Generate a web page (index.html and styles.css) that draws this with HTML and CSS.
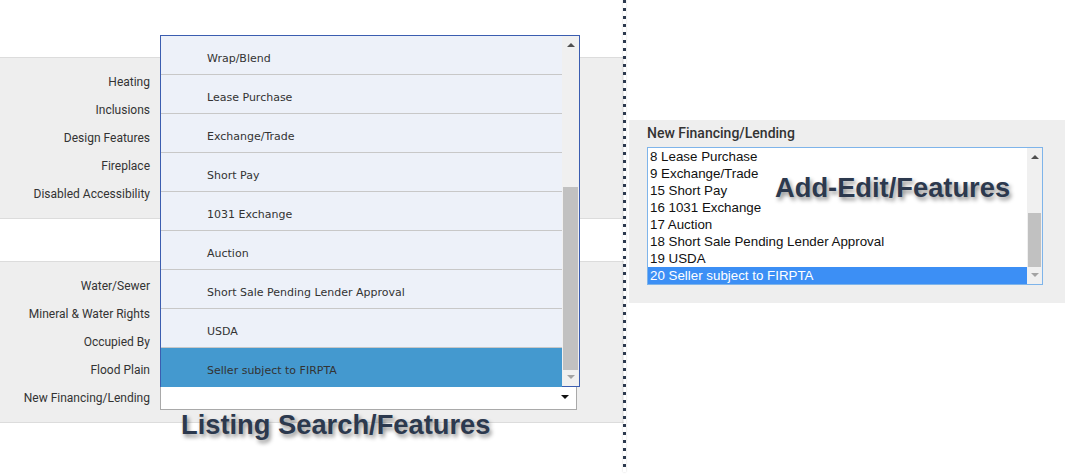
FILE: index.html
```html
<!DOCTYPE html>
<html>
<head>
  <link rel="stylesheet" href="styles.css">
</head>
<body>
  <div class="page">
    <div class="search-side">
      <div class="panel">
        <div class="row"><div class="row-label">Heating</div></div>
        <div class="row"><div class="row-label">Inclusions</div></div>
        <div class="row"><div class="row-label">Design Features</div></div>
        <div class="row"><div class="row-label">Fireplace</div></div>
        <div class="row"><div class="row-label">Disabled Accessibility</div></div>
      </div>

      <div class="panel panel-second">
        <div class="row"><div class="row-label">Water/Sewer</div></div>
        <div class="row"><div class="row-label">Mineral &amp; Water Rights</div></div>
        <div class="row"><div class="row-label">Occupied By</div></div>
        <div class="row"><div class="row-label">Flood Plain</div></div>
        <div class="row">
          <div class="row-label">New Financing/Lending</div>
          <div class="select-box">
            <span class="select-arrow"></span>
          </div>
        </div>
      </div>

      <!-- open dropdown of the select above -->
      <div class="option-popup">
        <div class="option-list">
          <div class="option">Wrap/Blend</div>
          <div class="option">Lease Purchase</div>
          <div class="option">Exchange/Trade</div>
          <div class="option">Short Pay</div>
          <div class="option">1031 Exchange</div>
          <div class="option">Auction</div>
          <div class="option">Short Sale Pending Lender Approval</div>
          <div class="option">USDA</div>
          <div class="option selected">Seller subject to FIRPTA</div>
        </div>
        <div class="scrollbar">
          <span class="arrow-up"></span>
          <div class="scroll-thumb popup-thumb"></div>
          <span class="arrow-down"></span>
        </div>
      </div>

      <div class="caption caption-search">Listing Search/Features</div>
    </div>

    <div class="divider"></div>

    <div class="edit-side">
      <div class="edit-panel">
        <div class="edit-label">New Financing/Lending</div>
        <div class="listbox">
          <div class="listbox-items">
            <div class="listbox-item">8 Lease Purchase</div>
            <div class="listbox-item">9 Exchange/Trade</div>
            <div class="listbox-item">15 Short Pay</div>
            <div class="listbox-item">16 1031 Exchange</div>
            <div class="listbox-item">17 Auction</div>
            <div class="listbox-item">18 Short Sale Pending Lender Approval</div>
            <div class="listbox-item">19 USDA</div>
            <div class="listbox-item selected">20 Seller subject to FIRPTA</div>
          </div>
          <div class="scrollbar listbox-scroll">
            <span class="arrow-up"></span>
            <div class="scroll-thumb listbox-thumb"></div>
            <span class="arrow-down"></span>
          </div>
        </div>
      </div>
      <div class="caption caption-edit">Add-Edit/Features</div>
    </div>
  </div>
</body>
</html>
```

FILE: styles.css
```css
body {
  margin: 0;
  background: white;
  font-family: Roboto, 'Noto Sans', sans-serif;
  color: #333;
}

.page {
  display: flex;
  position: relative;
  width: 1087px;
  height: 474px;
  overflow: hidden;
}

/* Listing search side */
.search-side {
  position: relative;
  width: 624px;
  padding-top: 57px;
}

.panel {
  background: #eeeeee;
  border-top: 1px solid #dcdcdc;
  border-bottom: 1px solid #dcdcdc;
  padding: 10px 0;
}

.panel-second {
  margin-top: 42px;
}

.row {
  display: flex;
  align-items: center;
  height: 28px;
}

.row-label {
  width: 150px;
  text-align: right;
  font-size: 12px;
  margin-right: 10px;
}

.select-box {
  position: relative;
  width: 415px;
  height: 22px;
  background: white;
  border: 1px solid #a9a9a9;
}

.select-arrow {
  position: absolute;
  right: 7px;
  top: 8px;
  border-left: 4px solid transparent;
  border-right: 4px solid transparent;
  border-top: 4px solid #111;
}

.option-popup {
  position: absolute;
  left: 160px;
  top: 35px;
  width: 418px;
  height: 350px;
  display: flex;
  border: 1px solid #3b5db0;
  background: #edf1f9;
}

.option-list {
  flex: 1;
}

.option {
  height: 31px;
  line-height: 31px;
  padding-top: 7px;
  padding-left: 46px;
  font-family: 'DejaVu Sans', Verdana, sans-serif;
  font-size: 11px;
  color: #333;
  border-bottom: 1px solid #c8c8c8;
}

.option.selected {
  background: #4499cf;
  border-bottom: none;
  height: 32px;
}

.scrollbar {
  position: relative;
  width: 17px;
  background: #f0f0f0;
}

.scroll-thumb {
  position: absolute;
  left: 1px;
  right: 1px;
  background: #c1c1c1;
}

.popup-thumb {
  top: 151px;
  height: 183px;
}

.arrow-up,
.arrow-down {
  position: absolute;
  left: 50%;
  margin-left: -4px;
  border-left: 4px solid transparent;
  border-right: 4px solid transparent;
}

.arrow-up {
  top: 7px;
  border-bottom: 4px solid #505050;
}

.arrow-down {
  bottom: 7px;
  border-top: 4px solid #a3a3a3;
}

.caption {
  position: absolute;
  font-family: 'Liberation Sans', Arial, sans-serif;
  font-weight: bold;
  font-size: 27.3px;
  color: #2c394e;
  text-shadow: 2px 3px 4px rgba(0,0,0,0.45);
  white-space: nowrap;
}

.caption-search {
  left: 181px;
  top: 409px;
}

/* dotted divider */
.divider {
  position: absolute;
  left: 623px;
  top: 0;
  width: 3px;
  height: 472px;
  background: repeating-linear-gradient(to bottom, #2c394e 0, #2c394e 3px, transparent 3px, transparent 8px);
  box-shadow: 0 0 2px rgba(0,0,0,0.2);
}

/* Add-edit side */
.edit-side {
  position: relative;
  width: 436px;
  margin-left: 5px;
  padding-top: 120px;
}

.edit-panel {
  background: #eeeeee;
  padding: 5px 22px 18px 18px;
}

.edit-label {
  font-size: 14px;
  font-weight: 500;
  line-height: 17px;
  margin-bottom: 5px;
}

.listbox {
  display: flex;
  height: 136px;
  background: white;
  border: 1px solid #7eb4ea;
}

.listbox-items {
  flex: 1;
}

.listbox-item {
  height: 17px;
  line-height: 17px;
  padding-left: 2px;
  font-family: 'Liberation Sans', Arial, sans-serif;
  font-size: 13.33px;
  color: #111;
}

.listbox-item.selected {
  background: #3c8ff5;
  color: white;
}

.listbox-scroll {
  width: 15px;
}

.listbox-thumb {
  top: 65px;
  height: 54px;
}

.caption-edit {
  left: 146px;
  top: 172px;
}
```
